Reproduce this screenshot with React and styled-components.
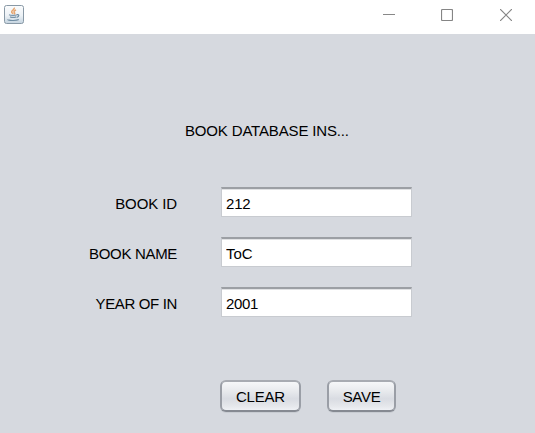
import React from "react";
import styled, { createGlobalStyle } from "styled-components";

const GlobalStyle = createGlobalStyle`
  body { margin: 0; overflow: hidden; }
  *, *::before, *::after { box-sizing: border-box; }
`;

const Window = styled.div`
  width: 535px;
  height: 433px;
  display: flex;
  flex-direction: column;
  background: #d6d9df;
  color: #000;
  font: 15px/18px "Liberation Sans", Arial, sans-serif;
`;

const TitleBar = styled.header`
  flex: 0 0 34px;
  display: flex;
  align-items: flex-start;
  justify-content: space-between;
  padding: 5px 0 0 4px;
  background: #fff;
`;

const Controls = styled.div`
  display: flex;
  margin: -5px 0 0;
`;

const ControlButton = styled.button`
  width: 58.5px;
  height: 30px;
  padding: 0;
  border: 0;
  background: none;
  display: flex;
  align-items: center;
  justify-content: center;
`;

const Content = styled.main`
  flex: 1;
  display: flex;
  flex-direction: column;
`;

const Heading = styled.div`
  margin: 88px 0 0 185px;
  white-space: nowrap;
  letter-spacing: -0.16px;
`;

const Form = styled.div`
  display: grid;
  grid-template-columns: 177px 191px;
  column-gap: 44px;
  row-gap: 20px;
  margin-top: 47px;
`;

const Label = styled.label`
  align-self: center;
  justify-self: end;
  padding-top: 3px;
  white-space: nowrap;
  letter-spacing: ${(p) => p.$tracking || "0"};
`;

const Field = styled.input`
  width: 191px;
  height: 30px;
  padding: 2px 4px 0;
  border: 1px solid #c8cbd0;
  border-top: 2px solid #9c9fa4;
  border-radius: 0;
  outline: 0;
  background: #fff;
  box-shadow: inset 0 1px 0 #e1e2e4;
  color: #000;
  font: inherit;
  letter-spacing: ${(p) => p.$tracking || "0"};
`;

const Actions = styled.div`
  display: flex;
  gap: 26px;
  margin: 63px 0 0 220px;
`;

const ActionButton = styled.button`
  width: ${(p) => p.$width}px;
  height: 32px;
  padding: 2px 0 0;
  border: 2px solid #9a9ea6;
  border-top-color: #a8abb2;
  border-bottom-color: #868a92;
  border-radius: 6px;
  background: linear-gradient(#f6f7f9 0%, #e9ebee 30%, #d9dce2 60%, #e5e7eb 85%, #eff1f5 100%);
  box-shadow: 0 1px 0 #c8ccd2;
  color: #000;
  font: inherit;
  letter-spacing: ${(p) => p.$tracking || "0"};
`;

function JavaIcon() {
  return (
    <svg width="20" height="20" viewBox="0 0 20 20" fill="none" aria-hidden="true">
      <defs>
        <linearGradient id="tile" x1="0" y1="0" x2="0" y2="1">
          <stop offset="0" stopColor="#fbfcfd" />
          <stop offset="0.55" stopColor="#edf2f6" />
          <stop offset="1" stopColor="#c4d3df" />
        </linearGradient>
      </defs>
      <rect x="0.5" y="0.5" width="19" height="18" rx="2" fill="url(#tile)" stroke="#8999a6" />
      <path d="M10.2 2.7c1 2-3.3 2.7-2.5 4.5.3.8 1.3 1.2 1.2 2M12 5c-2.6 1.2-2.2 2-1.4 3 .3.5.1 1-.4 1.4" stroke="#e6a56f" strokeWidth="1.5" />
      <path d="M5 9.8c1.5.8 6.5.8 8 0M6 11.8c1.8.7 4.5.7 6.2 0" stroke="#7893a8" strokeWidth="1.3" />
      <path d="M12.9 9.7c2.6-.6 2.5 1.8-.2 2.6M3.8 14.4c-.6 1.2 8.8 1.6 11 .2" stroke="#708da3" strokeWidth="1.2" />
    </svg>
  );
}

function MinimizeIcon() {
  return <svg width="12" height="12"><path d="M0 5.5h12" stroke="#888" /></svg>;
}

function MaximizeIcon() {
  return <svg width="12" height="12"><rect x=".5" y=".5" width="11" height="11" rx="1" fill="none" stroke="#858585" strokeWidth="1.2" /></svg>;
}

function CloseIcon() {
  return <svg width="12" height="12"><path d="M0 0l12 12M12 0L0 12" stroke="#858585" strokeWidth="1.2" /></svg>;
}

export default function App() {
  return (
    <>
      <GlobalStyle />
      <Window>
        <TitleBar>
          <JavaIcon />
          <Controls>
            <ControlButton aria-label="Minimize"><MinimizeIcon /></ControlButton>
            <ControlButton aria-label="Maximize"><MaximizeIcon /></ControlButton>
            <ControlButton aria-label="Close"><CloseIcon /></ControlButton>
          </Controls>
        </TitleBar>
        <Content>
          <Heading>BOOK DATABASE INS...</Heading>
          <Form>
            <Label htmlFor="book-id" $tracking="-0.1px">BOOK ID</Label>
            <Field id="book-id" defaultValue="212" $tracking="-0.2px" />
            <Label htmlFor="book-name" $tracking="-0.33px">BOOK NAME</Label>
            <Field id="book-name" defaultValue="ToC" />
            <Label htmlFor="year" $tracking="-0.35px">YEAR OF IN</Label>
            <Field id="year" defaultValue="2001" $tracking="-0.35px" />
          </Form>
          <Actions>
            <ActionButton type="button" $width={81} $tracking="-0.2px">CLEAR</ActionButton>
            <ActionButton type="button" $width={69} $tracking="-0.3px">SAVE</ActionButton>
          </Actions>
        </Content>
      </Window>
    </>
  );
}
